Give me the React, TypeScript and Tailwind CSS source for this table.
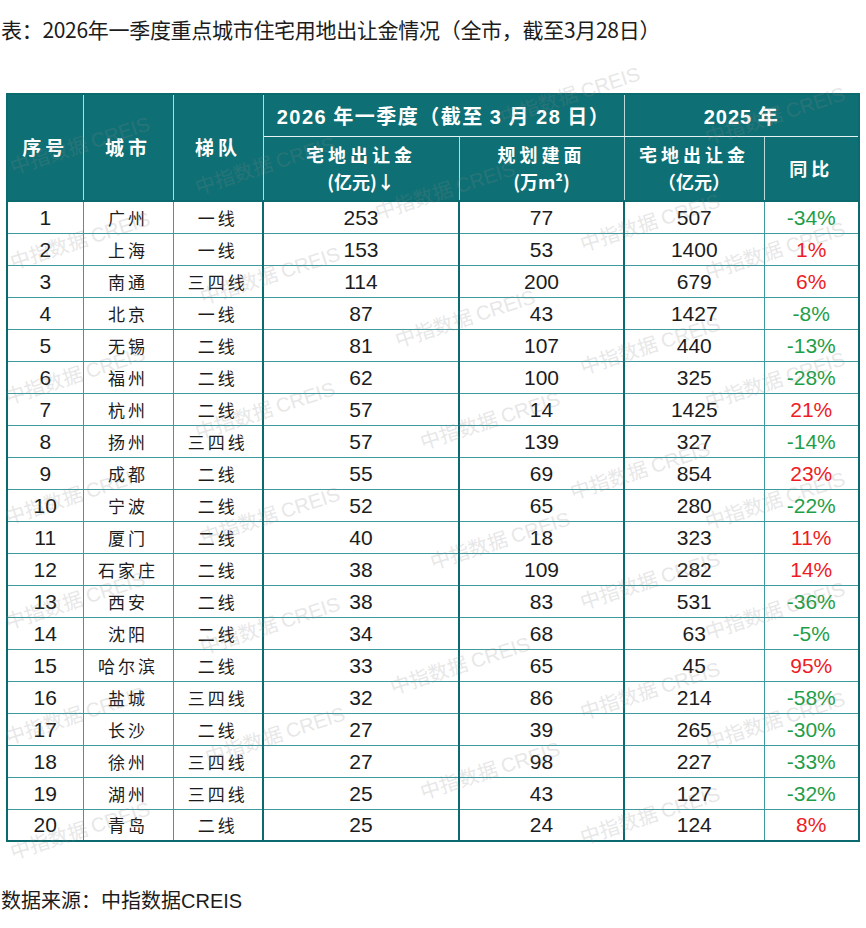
import React from "react";

type Row = [number, string, string, number, number, number, string];

const rows: Row[] = [
  [1, "广州", "一线", 253, 77, 507, "-34%"],
  [2, "上海", "一线", 153, 53, 1400, "1%"],
  [3, "南通", "三四线", 114, 200, 679, "6%"],
  [4, "北京", "一线", 87, 43, 1427, "-8%"],
  [5, "无锡", "二线", 81, 107, 440, "-13%"],
  [6, "福州", "二线", 62, 100, 325, "-28%"],
  [7, "杭州", "二线", 57, 14, 1425, "21%"],
  [8, "扬州", "三四线", 57, 139, 327, "-14%"],
  [9, "成都", "二线", 55, 69, 854, "23%"],
  [10, "宁波", "二线", 52, 65, 280, "-22%"],
  [11, "厦门", "二线", 40, 18, 323, "11%"],
  [12, "石家庄", "二线", 38, 109, 282, "14%"],
  [13, "西安", "二线", 38, 83, 531, "-36%"],
  [14, "沈阳", "二线", 34, 68, 63, "-5%"],
  [15, "哈尔滨", "二线", 33, 65, 45, "95%"],
  [16, "盐城", "三四线", 32, 86, 214, "-58%"],
  [17, "长沙", "二线", 27, 39, 265, "-30%"],
  [18, "徐州", "三四线", 27, 98, 227, "-33%"],
  [19, "湖州", "三四线", 25, 43, 127, "-32%"],
  [20, "青岛", "二线", 25, 24, 124, "8%"],
];

// 水印位置 (中心点)
const marks: [number, number][] = [
  [80, 145], [265, 165], [570, 95], [775, 115], [445, 190],
  [80, 240], [270, 275], [650, 222], [775, 250], [465, 318],
  [75, 375], [265, 410], [650, 345], [775, 380], [490, 420],
  [75, 495], [270, 515], [640, 470], [775, 500], [500, 540],
  [75, 600], [270, 625], [650, 580], [775, 610], [460, 665],
  [75, 715], [275, 735], [650, 690], [775, 720], [490, 770],
  [650, 815], [80, 830],
];

const cn = "font-['Noto_Sans_CJK_SC',sans-serif]";
const num = "font-['Liberation_Sans','Noto_Sans_CJK_SC',sans-serif]";

const thin = "border border-[#3f9a9e]";
const thick = "border-l-2 border-l-[#0b6a6e]";
const hd = "border border-[#b9d9da]";

const App = () => {
  return (
    <div className="w-[866px] h-[928px] bg-white text-[#1c1c1c] overflow-hidden">
      <div className={`${cn} text-[21px] leading-none pl-[1px] pt-[19px] tracking-[-0.3px]`}>
        表：2026年一季度重点城市住宅用地出让金情况（全市，截至3月28日）
      </div>

      <div className="relative ml-[6px] mt-[53px] w-[852px]">
        <table className="table-fixed border-collapse w-[852px] border-2 border-[#0b6a6e]">
          <colgroup>
            <col className="w-[76px]" />
            <col className="w-[90px]" />
            <col className="w-[90px]" />
            <col className="w-[196px]" />
            <col className="w-[165px]" />
            <col className="w-[140px]" />
            <col className="w-[95px]" />
          </colgroup>
          <thead className={`${cn} text-white bg-[#0e6f74]`}>
            <tr className="h-[42px]">
              <th rowSpan={2} className={`${hd} border-b-2 border-b-[#0b6a6e] text-[19px] tracking-[4px] font-bold`}>序号</th>
              <th rowSpan={2} className={`${hd} border-b-2 border-b-[#0b6a6e] text-[19px] tracking-[4px] font-bold`}>城市</th>
              <th rowSpan={2} className={`${hd} border-b-2 border-b-[#0b6a6e] text-[19px] tracking-[4px] font-bold`}>梯队</th>
              <th colSpan={2} className={`${hd} border-b-[#e6f2f2] text-[20px] tracking-[1.5px] font-bold pt-[2px]`}>
                <span className={num}>2026</span> 年一季度（截至 <span className={num}>3</span> 月 <span className={num}>28</span> 日）
              </th>
              <th colSpan={2} className={`${hd} border-b-[#e6f2f2] text-[20px] tracking-[1px] font-bold pt-[2px]`}>
                <span className={num}>2025</span> 年
              </th>
            </tr>
            <tr className="h-[65px]">
              <th className={`${hd} border-b-2 border-b-[#0b6a6e] text-[18px] leading-[27px] font-bold`}>
                <div className="tracking-[4px]">宅地出让金</div>
                <div>(亿元)↓</div>
              </th>
              <th className={`${hd} border-b-2 border-b-[#0b6a6e] text-[18px] leading-[27px] font-bold`}>
                <div className="tracking-[4px]">规划建面</div>
                <div>(万m²)</div>
              </th>
              <th className={`${hd} border-b-2 border-b-[#0b6a6e] text-[18px] leading-[27px] font-bold`}>
                <div className="tracking-[4px]">宅地出让金</div>
                <div>（亿元）</div>
              </th>
              <th className={`${hd} border-b-2 border-b-[#0b6a6e] text-[18px] font-bold tracking-[4px]`}>
                同比
              </th>
            </tr>
          </thead>
          <tbody>
            {rows.map((r) => {
              const neg = r[6].startsWith("-");
              return (
                <tr key={r[0]} className="h-[32px] text-center">
                  <td className={`${thin} ${num} text-[21px] leading-none`}>{r[0]}</td>
                  <td className={`${thin} ${cn} text-[17px] tracking-[3px] leading-none`}>{r[1]}</td>
                  <td className={`${thin} ${cn} text-[17px] tracking-[3px] leading-none`}>{r[2]}</td>
                  <td className={`${thin} ${thick} ${num} text-[21px] leading-none`}>{r[3]}</td>
                  <td className={`${thin} ${thick} ${num} text-[21px] leading-none`}>{r[4]}</td>
                  <td className={`${thin} ${thick} ${num} text-[21px] leading-none`}>{r[5]}</td>
                  <td className={`${thin} ${num} text-[21px] leading-none ${neg ? "text-[#1f9e48]" : "text-[#ee1c25]"}`}>{r[6]}</td>
                </tr>
              );
            })}
          </tbody>
        </table>

        {/* 水印 */}
        <div className="absolute inset-0 pointer-events-none">
          {marks.map(([x, y], i) => (
            <div
              key={i}
              className={`${cn} absolute whitespace-nowrap text-[20px] text-[#8c8c8c] opacity-20 -rotate-[18deg] -translate-x-1/2 -translate-y-1/2`}
              style={{ left: x - 6, top: y - 93 }}
            >
              中指数据 <span className={num}>CREIS</span>
            </div>
          ))}
        </div>
      </div>

      <div className={`${cn} text-[20px] leading-none pl-[1px] mt-[48px]`}>
        数据来源：中指数据<span className={num}>CREIS</span>
      </div>
    </div>
  );
};

export default App;
